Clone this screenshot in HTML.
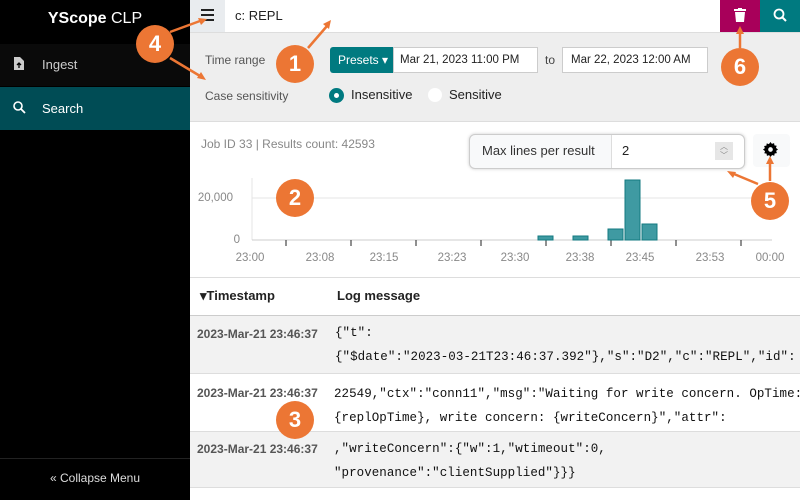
<!DOCTYPE html>
<html><head><meta charset="utf-8"><style>
*{box-sizing:border-box;margin:0;padding:0}
body{width:800px;height:500px;overflow:hidden;font-family:"Liberation Sans",sans-serif;background:#fff;position:relative;color:#222}
.a{position:absolute}
.sb{left:0;top:0;width:190px;height:500px;background:#000;color:#ddd}
.mono{font-family:"Liberation Mono",monospace;font-size:12.5px;color:#111;line-height:24px;letter-spacing:0.05px}
.ts{font-size:12px;color:#555;font-weight:bold}
.c{width:38px;height:38px;border-radius:50%;background:#ec7634;color:#fff;font-weight:bold;font-size:22px;text-align:center;line-height:38px}
</style></head><body>
<div class="a sb">
 <div class="a" style="left:0;top:10px;width:190px;text-align:center;font-size:16px;color:#fff"><b>YScope</b> CLP</div>
 <div class="a" style="left:0;top:44px;width:190px;height:42px;background:#0a0a0a"></div>
 <svg class="a" style="left:14px;top:57px" width="10" height="13"><path d="M0 0h6l4 4v9H0z" fill="#ccc"/><path d="M5 11V6M3 8l2-2 2 2" stroke="#000" stroke-width="1.3" fill="none"/></svg>
 <div class="a" style="left:42px;top:57px;font-size:13px;color:#ccc">Ingest</div>
 <div class="a" style="left:0;top:87px;width:190px;height:43px;background:#004c55"></div>
 <svg class="a" style="left:13px;top:101px" width="13" height="13"><circle cx="5" cy="5" r="4" stroke="#fff" stroke-width="1.6" fill="none"/><path d="M8 8l4 4" stroke="#fff" stroke-width="1.8"/></svg>
 <div class="a" style="left:42px;top:101px;font-size:13px;color:#fff">Search</div>
 <div class="a" style="left:0;top:458px;width:190px;border-top:1px solid #222"></div>
 <div class="a" style="left:0;top:471px;width:190px;text-align:center;font-size:12px;color:#ddd">« Collapse Menu</div>
</div>
<div class="a" style="left:190px;top:0;width:35px;height:32px;background:#e9ecef"></div>
<div class="a" style="left:201px;top:9px;width:13px;height:2px;background:#222;box-shadow:0 5px 0 #222,0 10px 0 #222"></div>
<div class="a" style="left:235px;top:8px;font-size:13px">c: REPL</div>
<div class="a" style="left:720px;top:0;width:40px;height:32px;background:#a8005a"></div>
<svg class="a" style="left:734px;top:8px" width="12" height="14"><rect x="0" y="1" width="12" height="2" fill="#fff"/><rect x="4" y="0" width="4" height="2" fill="#fff"/><path d="M1 4h10l-1 10H2z" fill="#fff"/></svg>
<div class="a" style="left:760px;top:0;width:40px;height:32px;background:#007a80"></div>
<svg class="a" style="left:773px;top:8px" width="14" height="14"><circle cx="6" cy="6" r="4.5" stroke="#fff" stroke-width="1.8" fill="none"/><path d="M9 9l4 4" stroke="#fff" stroke-width="2"/></svg>
<div class="a" style="left:190px;top:32px;width:610px;height:90px;background:#eee;border-top:1px solid #ddd;border-bottom:1px solid #ddd"></div>
<div class="a" style="left:205px;top:53px;font-size:12px;color:#555">Time range</div>
<div class="a" style="left:205px;top:89px;font-size:12px;color:#555">Case sensitivity</div>
<div class="a" style="left:330px;top:47px;width:63px;height:26px;background:#007a80;border-radius:3px 0 0 3px;color:#fff;font-size:12px;line-height:26px;padding-left:8px">Presets ▾</div>
<div class="a" style="left:393px;top:47px;width:145px;height:26px;background:#fff;border:1px solid #ccc;font-size:11.5px;line-height:24px;padding-left:6px">Mar 21, 2023 11:00 PM</div>
<div class="a" style="left:538px;top:47px;width:24px;height:26px;font-size:12px;line-height:26px;text-align:center;color:#444">to</div>
<div class="a" style="left:562px;top:47px;width:146px;height:26px;background:#fff;border:1px solid #ccc;font-size:11.5px;line-height:24px;padding-left:8px">Mar 22, 2023 12:00 AM</div>
<div class="a" style="left:329px;top:88px;width:15px;height:15px;border-radius:50%;background:#007a80"></div>
<div class="a" style="left:334px;top:93px;width:5px;height:5px;border-radius:50%;background:#fff"></div>
<div class="a" style="left:351px;top:87px;font-size:13px">Insensitive</div>
<div class="a" style="left:428px;top:88px;width:14px;height:14px;border-radius:50%;background:#fff"></div>
<div class="a" style="left:449px;top:87px;font-size:13px">Sensitive</div>
<div class="a" style="left:201px;top:137px;font-size:12px;color:#888">Job ID 33 | Results count: 42593</div>
<div class="a" style="left:469px;top:134px;width:276px;height:35px;border:1px solid #ccc;border-radius:6px;background:#f8f9fa;box-shadow:0 0 3px #ccc"></div>
<div class="a" style="left:482px;top:143px;font-size:13px;color:#333">Max lines per result</div>
<div class="a" style="left:611px;top:135px;width:133px;height:33px;background:#fff;border-left:1px solid #ddd;border-radius:0 6px 6px 0"></div>
<div class="a" style="left:622px;top:143px;font-size:13px">2</div>
<div class="a" style="left:715px;top:142px;width:18px;height:18px;background:#e6e6e6;font-size:8px;text-align:center;line-height:9px;color:#888">︿<br>﹀</div>
<div class="a" style="left:753px;top:134px;width:37px;height:33px;background:#f8f9fa;border-radius:4px"></div>
<svg class="a" style="left:763px;top:142px" width="15" height="15" viewBox="0 0 16 16"><path d="M8 0l1.5 2 2.3-.8.4 2.4 2.4.4-.8 2.3L16 8l-2 1.5.8 2.3-2.4.4-.4 2.4-2.3-.8L8 16l-1.5-2-2.3.8-.4-2.4-2.4-.4.8-2.3L0 8l2-1.5-.8-2.3 2.4-.4.4-2.4 2.3.8z" fill="#000"/><circle cx="8" cy="8" r="2.5" fill="#f8f9fa"/></svg>
<svg class="a" style="left:190px;top:170px" width="610" height="100">
 <line x1="62" y1="28" x2="582" y2="28" stroke="#e4e4e4"/>
 <line x1="62" y1="8" x2="62" y2="70" stroke="#e4e4e4"/>
 <line x1="62" y1="70" x2="582" y2="70" stroke="#ccc"/>
 <g stroke="#222"><path d="M96 70v6M161 70v6M226 70v6M291 70v6M356 70v6M421 70v6M486 70v6M551 70v6"/></g>
 <g fill="#3f9aa2" stroke="#137a80"><rect x="348" y="66" width="15" height="4"/><rect x="383" y="66" width="15" height="4"/><rect x="418" y="59" width="15" height="11"/><rect x="435" y="10" width="15" height="60"/><rect x="452" y="54" width="15" height="16"/></g>
 <g font-family="Liberation Sans" font-size="11.5" fill="#888"><text x="43" y="31" text-anchor="end">20,000</text><text x="50" y="73" text-anchor="end">0</text>
 <g text-anchor="middle"><text x="60" y="91">23:00</text><text x="130" y="91">23:08</text><text x="194" y="91">23:15</text><text x="262" y="91">23:23</text><text x="325" y="91">23:30</text><text x="390" y="91">23:38</text><text x="450" y="91">23:45</text><text x="520" y="91">23:53</text><text x="580" y="91">00:00</text></g></g>
</svg>
<div class="a" style="left:190px;top:277px;width:610px;border-top:1px solid #ddd"></div>
<div class="a" style="left:200px;top:288px;font-size:13px;font-weight:bold">▾Timestamp</div>
<div class="a" style="left:337px;top:288px;font-size:13px;font-weight:bold">Log message</div>
<div class="a" style="left:190px;top:315px;width:610px;height:59px;background:#f2f2f2;border-top:1.5px solid #ccc;border-bottom:1px solid #ddd"></div>
<div class="a" style="left:190px;top:431px;width:610px;height:57px;background:#f2f2f2;border-top:1px solid #ddd;border-bottom:1px solid #ddd"></div>
<div class="a ts" style="left:197px;top:327px">2023-Mar-21 23:46:37</div>
<div class="a ts" style="left:197px;top:386px">2023-Mar-21 23:46:37</div>
<div class="a ts" style="left:197px;top:442px">2023-Mar-21 23:46:37</div>
<div class="a mono" style="left:335px;top:321px;white-space:nowrap">{"t":<br>{"$date":"2023-03-21T23:46:37.392"},"s":"D2","c":"REPL","id":</div>
<div class="a mono" style="left:334px;top:382px;white-space:nowrap">22549,"ctx":"conn11","msg":"Waiting for write concern. OpTime:<br>{replOpTime}, write concern: {writeConcern}","attr":</div>
<div class="a mono" style="left:334px;top:437px;white-space:nowrap">,"writeConcern":{"w":1,"wtimeout":0,<br>"provenance":"clientSupplied"}}}</div>
<svg class="a" style="left:0;top:0" width="800" height="500"><g stroke="#ec7634" stroke-width="2.5" fill="#ec7634">
<line x1="170" y1="32" x2="200" y2="21"/><path d="M207 19l-9-1 3 7z" stroke="none"/>
<line x1="170" y1="58" x2="200" y2="76"/><path d="M206 80l-5-8-4 6z" stroke="none"/>
<line x1="308" y1="48" x2="327" y2="26"/><path d="M331 20l-8 4 6 5z" stroke="none"/>
<line x1="758" y1="184" x2="734" y2="174"/><path d="M727 171l6 7 3-6z" stroke="none"/>
<line x1="770" y1="181" x2="770" y2="163"/><path d="M770 156l-4 8h8z" stroke="none"/>
<line x1="740" y1="48" x2="740" y2="33"/><path d="M740 26l-4 8h8z" stroke="none"/>
</g></svg>
<div class="a c" style="left:276px;top:45px">1</div>
<div class="a c" style="left:276px;top:179px">2</div>
<div class="a c" style="left:276px;top:401px">3</div>
<div class="a c" style="left:136px;top:25px">4</div>
<div class="a c" style="left:751px;top:182px">5</div>
<div class="a c" style="left:721px;top:48px">6</div>
</body></html>
